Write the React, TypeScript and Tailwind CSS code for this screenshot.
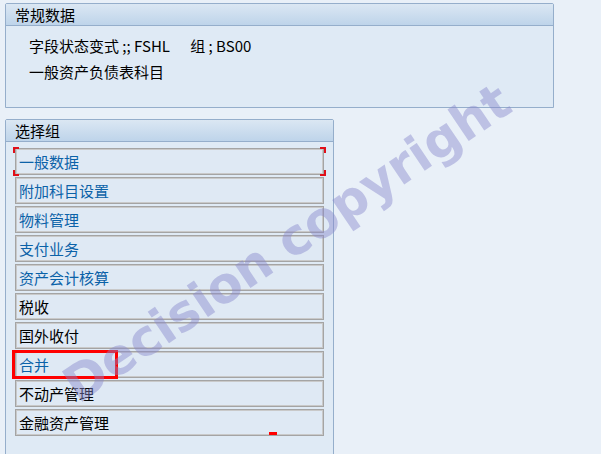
const groups: { label: string; link: boolean }[] = [
  { label: "一般数据", link: true },
  { label: "附加科目设置", link: true },
  { label: "物料管理", link: true },
  { label: "支付业务", link: true },
  { label: "资产会计核算", link: true },
  { label: "税收", link: false },
  { label: "国外收付", link: false },
  { label: "合并", link: true },
  { label: "不动产管理", link: false },
  { label: "金融资产管理", link: false },
];

const font = "font-['SimSun','Noto_Sans_CJK_SC',sans-serif]";

function PanelHeader({ title }: { title: string }) {
  return (
    <div className="flex h-[22px] items-center border-b border-[#95aecb] bg-gradient-to-b from-[#dbe7f3] to-[#bed4ea] pl-[9px] text-[15px] leading-none text-black">
      {title}
    </div>
  );
}

export default function App() {
  return (
    <div className={`relative h-[454px] w-[601px] overflow-hidden bg-[#e9f0f8] pl-[5px] pt-[3px] ${font}`}>
      <section className="h-[105px] w-[549px] rounded-t-[2px] border border-[#95aecb] bg-[#dfeaf5]">
        <PanelHeader title="常规数据" />
        <div className="flex flex-col gap-[9px] pl-[23px] pt-[11px] text-[15px] leading-[17px] text-black">
          <p className="whitespace-pre">字段状态变式 ;; FSHL      组 ; BS00</p>
          <p>一般资产负债表科目</p>
        </div>
      </section>

      <section className="mt-[11px] h-[360px] w-[329px] rounded-t-[2px] border border-[#95aecb] bg-[#dfeaf5]">
        <PanelHeader title="选择组" />
        <div className="flex flex-col gap-[2px] pl-[9px] pt-[6px]">
          {groups.map((g, i) => (
            <div key={g.label} className="relative w-[309px]">
              <div
                className={`flex h-[27px] items-center border border-[#a4a4a4] bg-[#dfe9f4] pl-[3px] text-[15px] leading-none shadow-[inset_1px_1px_0_#c9c9c9,inset_-1px_-1px_0_#c9c9c9] ${
                  g.link ? "text-[#0b62a8]" : "text-black"
                }`}
              >
                {g.label}
              </div>
              {i === 0 && (
                <>
                  <span className="absolute left-[-2px] top-[-1px] h-[6px] w-[6px] border-l-2 border-t-2 border-[#e0101a]" />
                  <span className="absolute right-[-2px] top-[-1px] h-[6px] w-[6px] border-r-2 border-t-2 border-[#e0101a]" />
                  <span className="absolute bottom-[-1px] left-[-2px] h-[6px] w-[6px] border-b-2 border-l-2 border-[#e0101a]" />
                  <span className="absolute bottom-[-1px] right-[-2px] h-[6px] w-[6px] border-b-2 border-r-2 border-[#e0101a]" />
                </>
              )}
            </div>
          ))}
        </div>
      </section>

      <div className="pointer-events-none absolute left-[12px] top-[350px] h-[29px] w-[106px] border-[3px] border-[#ff0000]" />
      <div className="pointer-events-none absolute left-[269px] top-[432px] h-[3px] w-[8px] bg-[#ff0000]" />

      <div className="pointer-events-none absolute left-[24px] top-[218px] origin-center -rotate-[34deg] whitespace-nowrap font-['DejaVu_Sans',sans-serif] text-[50px] font-bold leading-none text-[#8888cc]/45">
        Decision copyright
      </div>
    </div>
  );
}
